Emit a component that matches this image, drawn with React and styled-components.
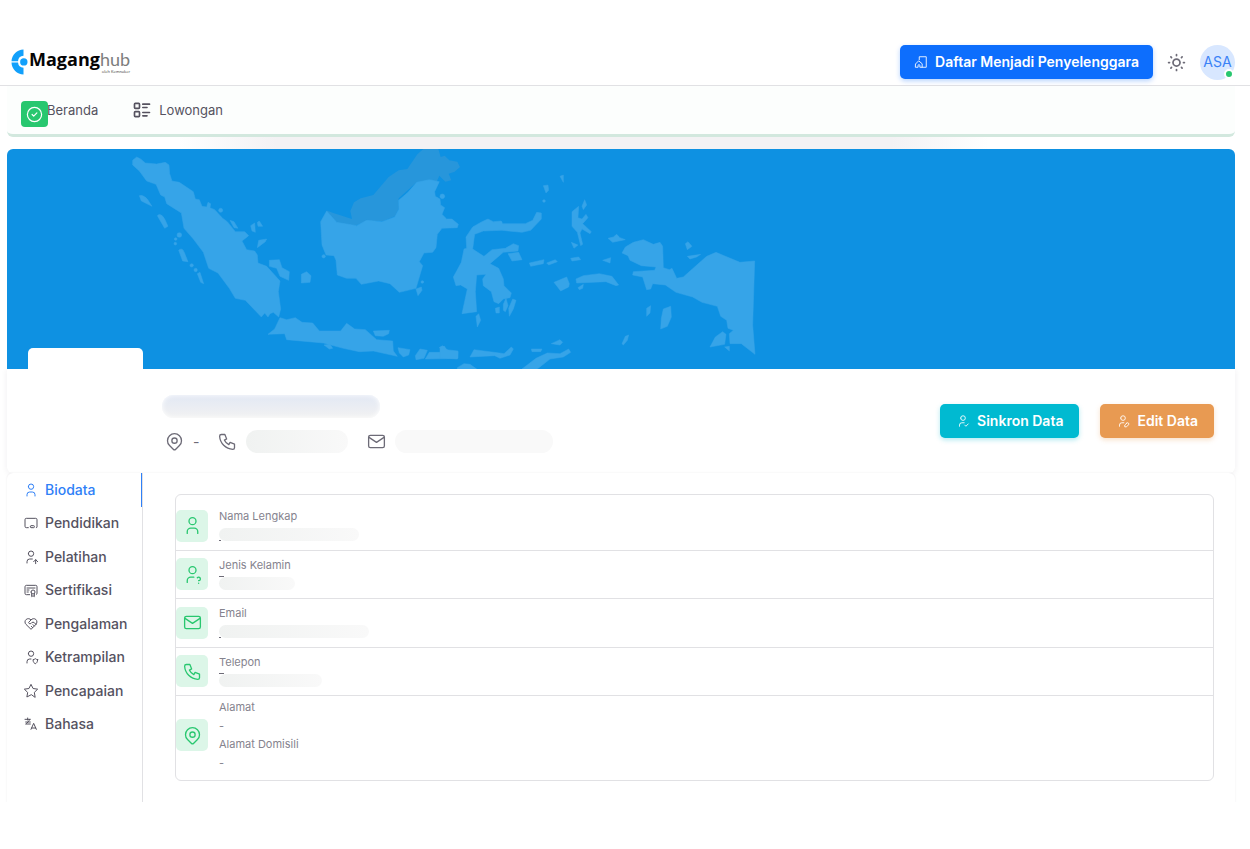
import React from "react"
import styled, { createGlobalStyle } from "styled-components"
import {
    TbCertificate,
    TbChalkboard,
    TbCircleCheck,
    TbHeartHandshake,
    TbListDetails,
    TbMail,
    TbMapPin,
    TbPhone,
    TbStar,
    TbSun,
    TbUser,
    TbUserCheck,
    TbUserEdit,
    TbUserQuestion,
    TbUserShield,
    TbUserUp,
} from "react-icons/tb"

const LanguageIcon = ({ size }) => (
    <svg width={size} height={size} viewBox="0 0 24 24" fill="none" stroke="currentColor" strokeLinecap="round" strokeLinejoin="round" aria-hidden="true">
        <path d="M3 5h8M7 3v3M10 5c-1 3-3 5-6 7M4 9h7M5 12h6" />
        <path d="M12 20l4-9 4 9M19.1 18h-6.2" />
    </svg>
)

const menu = [
    { label: "Biodata", icon: TbUser },
    { label: "Pendidikan", icon: TbChalkboard },
    { label: "Pelatihan", icon: TbUserUp },
    { label: "Sertifikasi", icon: TbCertificate },
    { label: "Pengalaman", icon: TbHeartHandshake },
    { label: "Ketrampilan", icon: TbUserShield },
    { label: "Pencapaian", icon: TbStar },
    { label: "Bahasa", icon: LanguageIcon },
]

const fields = [
    { label: "Nama Lengkap", icon: TbUser, width: 140, mark: "bottom" },
    { label: "Jenis Kelamin", icon: TbUserQuestion, width: 76, mark: "top" },
    { label: "Email", icon: TbMail, width: 150, mark: "bottom" },
    { label: "Telepon", icon: TbPhone, width: 103, mark: "top" },
]

const Logo = () => (
    <LogoLink href="#" aria-label="Maganghub">
        <svg width="17" height="26" viewBox="0 0 17 26" aria-hidden="true">
            <path d="M12.5 .5A12.3 12.3 0 0 0 .5 12.2H7a5.8 5.8 0 0 1 5.5-5.4z" fill="#12a0fb" />
            <path d="M12.5 25.5A12.3 12.3 0 0 1 .5 13.6H7a5.8 5.8 0 0 0 5.5 5.2z" fill="#12a0fb" />
            <circle cx="12.8" cy="12.9" r="3.7" fill="#12a0fb" />
        </svg>
        <Wordmark>
            <span><b>Magang</b>hub</span>
            <small>oleh Kemnaker</small>
        </Wordmark>
    </LogoLink>
)

const HouseIcon = () => (
    <svg width="14" height="14" viewBox="0 0 24 24" fill="none" stroke="currentColor" strokeLinecap="round" strokeLinejoin="round" aria-hidden="true">
        <path d="M9 8V3h12v18h-7" />
        <path d="M3 15l5-5 6 5v6h-4v-3a1.500 1.500 0 0 0-3 0v3H3z" />
    </svg>
)

const IndonesiaMap = () => (
    <MapDrawing width="760" height="221" viewBox="0 0 760 221" aria-hidden="true">
        <g transform="translate(113 -4) scale(.33333)">
            <g fill="#2796db">
                <path d="M618 196L640 204L696 222L691 198L702 172L722 160L760 150L806 96L836 76L862 72L892 28L910 12L955 12L962 36L974 32L988 46L1012 50L1020 66L1004 80L986 86L994 106L976 110L958 92L950 110L890 112L836 160L837 190L825 214L790 228L740 228L706 242L652 236Z" />
            </g>
            <path d="M38 46L50 36L62 42L76 54L110 57L136 52L147 60L149 86L156 108L178 112L220 140L226 162L238 164L246 184L260 186L264 172L272 176L270 188L284 194L308 220L322 230L346 260L374 260L386 272L366 288L380 314L404 318L412 330L414 354L440 364L480 408L475 440L482 492L476 516L460 502L450 506L444 516L434 504L424 516L376 466L346 460L328 430L294 384L266 370L250 322L220 282L192 250L184 204L140 176L134 156L122 150L108 118L80 108L58 78L38 60Z" />
            <path d="M620 198L650 232L710 242L740 226L786 230L824 216L837 192L836 166L864 142L890 112L928 104L958 110L944 140L946 154L960 162L962 180L974 188L966 208L980 222L996 222L1015 238L1012 248L966 250L952 268L948 308L938 322L912 324L898 350L908 362L888 430L838 442L810 416L776 408L724 418L708 400L680 400L652 390L648 346L642 332L618 330L606 300L602 230Z" />
            <path d="M480 518L500 524L526 518L546 532L578 534L598 558L662 558L680 535L704 552L736 554L770 584L818 588L820 618L832 634L760 618L718 620L670 610L610 594L500 584L494 566L444 568L464 552Z" />
            <path d="M58 152Q68 148 82 162L96 184L64 168ZM112 212Q122 202 134 222L144 244L134 250ZM176 316Q186 306 192 320L204 350L188 348ZM232 386L240 382L251 416L242 412ZM330 226L342 230L354 250L342 248ZM392 242L404 234L406 262L396 258ZM412 232L418 228L428 244L414 244ZM416 286L440 282L436 290L412 308ZM448 346L478 344L486 368L508 380L506 406L480 394L470 370L448 364ZM544 388L560 380L573 392L570 412L544 414ZM612 600L630 598L638 610L628 612ZM760 558L808 556L806 566L790 574L766 572ZM834 608L870 614L866 630L850 636L838 624ZM886 632L900 612L922 616L912 640L888 644ZM916 642L928 622L974 622L958 608L968 602L986 618L1014 620L1014 640ZM888 432L904 426L906 436L894 452Z" />
            <circle cx="302" cy="196" r="6" />
            <circle cx="178" cy="270" r="7" />
            <circle cx="167" cy="282" r="4" />
            <circle cx="166" cy="296" r="4" />
            <circle cx="215" cy="361" r="5" />
            <circle cx="227" cy="375" r="5" />
            <circle cx="611" cy="334" r="5" />
            <circle cx="907" cy="411" r="4" />
            <circle cx="967" cy="154" r="7" />
        </g>
        <g transform="translate(433 -4) scale(.33333)">
            <path d="M80 310L78 276L98 246L126 230L144 222L160 230L184 228L188 236L256 236L278 226L290 202L304 204L304 222L272 256L246 262L186 256L130 258L104 268L98 312L132 334L156 314L196 310L220 296L236 302L234 318L190 322L150 356L176 370L190 402L192 422L214 444L210 458L190 462L176 476L162 470L154 440L130 422L128 402L138 388L110 390L106 440L110 500L66 506L82 432L62 420L48 422L40 396L50 378L64 352L72 312Z" />
            <path d="M204 326L236 322L246 344L216 348ZM268 354L312 344L310 356L272 364ZM320 354L346 344L352 350L326 360ZM392 340L416 336L422 344L396 348ZM396 200L416 184L414 218L426 222L438 208L444 218L428 236L454 260L450 266L426 252L420 264L428 298L422 302L412 262L396 244ZM426 184L434 164L440 180L430 194ZM394 292L414 300L402 310ZM310 122L324 120L326 136L318 144ZM360 94L370 90L370 112ZM504 280L520 276L530 268L540 278L556 284L518 292ZM488 346L512 338L510 354ZM342 412L380 396L388 416L386 426L362 438ZM408 402L430 392L478 386L516 394L536 420L528 422L498 410L410 414ZM414 428L430 418L428 430L418 434ZM546 324L556 306L580 292L610 284L640 298L660 292L668 304L670 368L688 374L696 370L710 400L730 396L800 334L828 322L900 352L944 348L938 540L945 628L904 596L870 596L868 566L880 556L864 550L860 526L842 514L832 484L786 472L758 456L708 442L676 420L638 416L632 432L620 434L608 396L578 390L580 380L644 376L648 366L604 362L570 346L564 332ZM736 296L744 290L756 304L742 314ZM742 334L782 328L770 336L750 342ZM620 490L632 482L630 504L620 514ZM670 492L692 484L694 516L682 544L662 552L664 520ZM810 606L826 576L848 560L858 568L854 598ZM854 606L868 604L868 618ZM546 596L556 574L566 570L562 586L550 600ZM334 596L360 584L368 592L360 600ZM274 612L306 612L302 620L276 620ZM90 636L102 614L178 624L192 626L214 606L220 612L210 630L180 640L164 632ZM52 668L72 656L90 658L110 672H52ZM246 672L288 640L322 624L360 626L386 612L392 622L370 636L330 642L292 672ZM0 606L14 604L18 614L54 618L52 642L0 638ZM108 514L116 506L122 526L112 546ZM166 490L178 486L178 504L168 504ZM190 478L198 460L204 482L196 500L190 496ZM206 490L218 462L228 466L220 492L208 514Z" />
            <circle cx="312" cy="168" r="4" />
        </g>
    </MapDrawing>
)

const Field = ({ label, icon: Icon, width, mark }) => (
    <FieldRow>
        <FieldIcon><Icon size={21} /></FieldIcon>
        <dl>
            <dt>{label}</dt>
            <dd><Hidden $width={width} $height={13} $mark={mark} /></dd>
        </dl>
    </FieldRow>
)

export default function App() {
    return (
        <>
            <GlobalStyle />
            <Header>
                <Logo />
                <HeaderActions>
                    <Button $color="#0d6efd" $space={14}><HouseIcon />Daftar Menjadi Penyelenggara</Button>
                    <IconButton type="button" aria-label="Tema"><TbSun size={21} /></IconButton>
                    <Avatar type="button">ASA</Avatar>
                </HeaderActions>
            </Header>
            <Content>
                <Nav>
                    <Toast><TbCircleCheck size={19} /></Toast>
                    <a href="#">Beranda</a>
                    <a href="#"><TbListDetails size={20} />Lowongan</a>
                </Nav>
                <NavShade />
                <Banner>
                    <IndonesiaMap />
                    <Photo />
                </Banner>
                <Profile>
                    <div>
                        <Name />
                        <Contacts>
                            <li><TbMapPin size={21} />-</li>
                            <li><TbPhone size={21} /><Hidden $width={102} $height={23} /></li>
                            <li><TbMail size={21} /><Hidden $width={158} $height={23} $pale /></li>
                        </Contacts>
                    </div>
                    <ProfileActions>
                        <Button $color="#00bad1" $space={16}><TbUserCheck size={14} />Sinkron Data</Button>
                        <Button $color="#e89a52" $space={16}><TbUserEdit size={14} />Edit Data</Button>
                    </ProfileActions>
                </Profile>
                <Panel>
                    <Sidebar>
                        <Menu>
                            {menu.map(({ label, icon: Icon }, i) => (
                                <MenuLink key={label} href="#" $active={i === 0}>
                                    <Icon size={16} />{label}
                                </MenuLink>
                            ))}
                        </Menu>
                    </Sidebar>
                    <Fields>
                        {fields.map((field) => <Field key={field.label} {...field} />)}
                        <FieldRow>
                            <FieldIcon><TbMapPin size={21} /></FieldIcon>
                            <dl>
                                <dt>Alamat</dt>
                                <dd>-</dd>
                                <dt>Alamat Domisili</dt>
                                <dd>-</dd>
                            </dl>
                        </FieldRow>
                    </Fields>
                </Panel>
            </Content>
        </>
    )
}

const GlobalStyle = createGlobalStyle`
    *, *::before, *::after {
        box-sizing: border-box;
    }

    body {
        margin: 0;
        padding-top: 41px;
        background: #fff;
        color: #55525f;
        font: 14px/20px Inter, "Liberation Sans", sans-serif;
    }

    a {
        color: inherit;
        text-decoration: none;
    }

    button {
        font: inherit;
        border: 0;
        cursor: pointer;
    }

    svg {
        flex: none;
        stroke-width: 1.5;
    }
`

const Header = styled.header`
    display: flex;
    align-items: center;
    justify-content: space-between;
    height: 45px;
    padding: 0 15px 2px 11px;
    border-bottom: 1px solid #e1e1e4;
`

const LogoLink = styled.a`
    display: flex;
    align-items: center;
    gap: 1px;
`

const Wordmark = styled.span`
    display: flex;
    flex-direction: column;
    padding-bottom: 2px;
    color: #7d7d7d;
    font: 400 18px/22px Lato, sans-serif;

    b {
        color: #050505;
        font-family: "Open Sans", sans-serif;
        font-weight: 700;
    }

    small {
        align-self: flex-end;
        color: #333;
        font: 4px/4px "Open Sans", sans-serif;
    }
`

const HeaderActions = styled.div`
    display: flex;
    align-items: center;
    gap: 13px;
`

const Button = styled.button.attrs({ type: "button" })`
    display: flex;
    align-items: center;
    gap: 7px;
    height: 34px;
    padding: 0 ${({ $space }) => $space}px;
    border-radius: 5px;
    background: ${({ $color }) => $color};
    box-shadow: 0 2px 5px ${({ $color }) => $color}4d;
    color: #fff;
    font-weight: 600;
`

const IconButton = styled.button`
    display: flex;
    padding: 0;
    background: none;
    color: #6d6b77;

    svg {
        stroke-width: 2;
    }
`

const Avatar = styled.button`
    position: relative;
    width: 35px;
    height: 35px;
    padding: 0;
    border-radius: 50%;
    background: #d8e7ff;
    color: #3b82f6;

    &::after {
        content: "";
        position: absolute;
        right: 1px;
        bottom: 1px;
        width: 10px;
        height: 10px;
        border: 2px solid #fff;
        border-radius: 50%;
        background: #28c76f;
    }
`

const Content = styled.main`
    padding: 0 15px 0 7px;
`

const Nav = styled.nav`
    position: relative;
    display: flex;
    gap: 34px;
    height: 51px;
    padding: 14px 40px 0;
    border-bottom: 3px solid #d2e8de;
    border-radius: 0 0 6px 6px;
    background: #fcfefd;
    font-size: 13px;

    a {
        display: flex;
        align-items: center;
        align-self: flex-start;
        gap: 7px;
        line-height: 20px;
    }

    a svg {
        stroke-width: 2;
    }
`

const Toast = styled.span`
    position: absolute;
    top: 15px;
    left: 14px;
    display: grid;
    place-items: center;
    width: 27px;
    height: 26px;
    border-radius: 4px;
    background: #28c76f;
    color: #fff;
`

const NavShade = styled.div`
    height: 12px;
    margin: 0 20% 0 14%;
    background: linear-gradient(90deg, #fff, #f3f2f4 12%, #f3f2f4 88%, #fff);
`

const Banner = styled.div`
    position: relative;
    height: 220px;
    overflow: hidden;
    border-radius: 6px 6px 0 0;
    background: #0e91e2;
`

const MapDrawing = styled.svg`
    display: block;
    fill: #36a4e8;
    stroke: #36a4e8;
    stroke-linejoin: round;

    g g {
        stroke: none;
    }
`

const Photo = styled.div`
    position: absolute;
    bottom: 0;
    left: 21px;
    width: 115px;
    height: 21px;
    border-radius: 5px 5px 0 0;
    background: #fff;
`

const Profile = styled.section`
    display: flex;
    justify-content: space-between;
    height: 104px;
    padding: 26px 21px 0 155px;
    border-radius: 0 0 6px 6px;
    background: #fff;
    box-shadow: 0 1px 6px #2f2b3d14;
`

const Name = styled.div`
    width: 218px;
    height: 23px;
    border-radius: 12px;
    background: linear-gradient(#e2e8f4, #f2f2f2);
    box-shadow: inset 0 0 5px #fff;
`

const Contacts = styled.ul`
    display: flex;
    gap: 18px;
    margin: 12px 0 0;
    padding: 0 0 0 2px;
    list-style: none;
    color: #6d6b77;

    li {
        display: flex;
        align-items: center;
        gap: 8px;
    }
`

const Hidden = styled.span`
    position: relative;
    display: block;
    width: ${({ $width }) => $width}px;
    height: ${({ $height }) => $height}px;
    border-radius: 12px;
    background: ${({ $pale }) => ($pale ? "#f9f9f9" : "linear-gradient(90deg, #f0f2f1, #f9f9f9)")};

    &::before {
        content: "";
        position: absolute;
        ${({ $mark }) => ($mark === "top" ? "top: -1px" : "bottom: 0")};
        left: 0;
        display: ${({ $mark }) => ($mark ? "block" : "none")};
        width: ${({ $mark }) => ($mark === "top" ? 5 : 2)}px;
        height: 1px;
        background: #6d6b77;
    }
`

const ProfileActions = styled.div`
    display: flex;
    gap: 21px;
    padding-top: 9px;
`

const Panel = styled.section`
    display: flex;
    height: 329px;
    border-radius: 6px 6px 0 0;
    background: #fff;
    box-shadow: 0 0 2px #2f2b3d1a;
`

const Sidebar = styled.aside`
    width: 136px;
    border-right: 1px solid #e1e1e4;
`

const Menu = styled.nav`
    display: grid;
    grid-template-rows: repeat(8, 1fr);
    height: 268px;
`

const MenuLink = styled.a`
    display: flex;
    align-items: center;
    gap: 6px;
    padding-left: 16px;
    border-right: 1px solid ${({ $active }) => ($active ? "#2f80f7" : "transparent")};
    color: ${({ $active }) => ($active ? "#2f80f7" : "inherit")};
    font-weight: 500;
`

const Fields = styled.div`
    flex: 1;
    display: grid;
    grid-template-rows: repeat(4, 1fr) 84px;
    height: 287px;
    margin: 21px 21px 0 32px;
    padding-top: 7px;
    border: 1px solid #e1e1e4;
    border-radius: 6px;
`

const FieldRow = styled.div`
    display: flex;
    align-items: center;
    gap: 11px;
    border-bottom: 1px solid #e1e1e4;

    &:last-child {
        padding-bottom: 6px;
        border-bottom: 0;
    }

    dl {
        margin: 0;
        color: #85838e;
        font-size: 11px;
    }

    dt {
        line-height: 18px;
    }

    dd {
        display: flex;
        align-items: center;
        height: 19px;
        margin: 0;
    }
`

const FieldIcon = styled.span`
    display: grid;
    place-items: center;
    width: 32px;
    height: 32px;
    border-radius: 5px;
    background: #dcf6e8;
    color: #28c76f;
`
